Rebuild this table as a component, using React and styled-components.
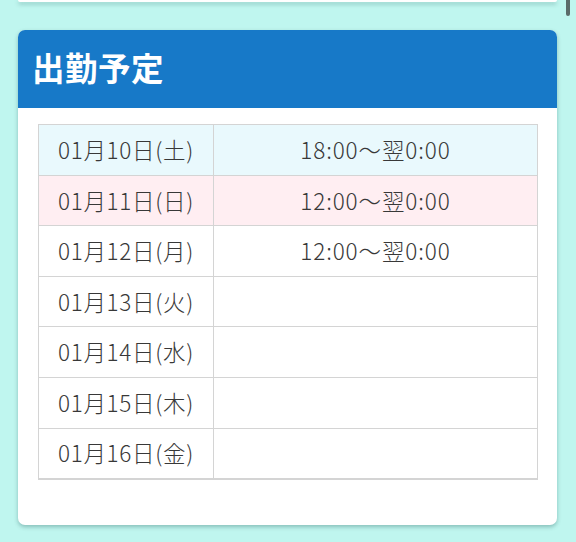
import styled, { createGlobalStyle } from "styled-components";

const schedule = [
  { date: "01月10日(土)", time: "18:00〜翌0:00", tone: "sat" },
  { date: "01月11日(日)", time: "12:00〜翌0:00", tone: "sun" },
  { date: "01月12日(月)", time: "12:00〜翌0:00" },
  { date: "01月13日(火)", time: "" },
  { date: "01月14日(水)", time: "" },
  { date: "01月15日(木)", time: "" },
  { date: "01月16日(金)", time: "" },
];

const toneColors = {
  sat: "#e9f9fd",
  sun: "#ffeef2",
};

const GlobalStyle = createGlobalStyle`
  html, body {
    margin: 0;
    background: #bff6ef;
    overflow: hidden;
  }
  body {
    font-family: "Noto Sans CJK JP", "Noto Sans", sans-serif;
  }
`;

const App = () => {
  return (
    <Page>
      <GlobalStyle />
      <TopCard />
      <Card>
        <CardHeader>
          <Title>出勤予定</Title>
        </CardHeader>
        <CardBody>
          <Table>
            <tbody>
              {schedule.map((row) => (
                <Row key={row.date} $tone={row.tone}>
                  <DateCell>{row.date}</DateCell>
                  <TimeCell>{row.time}</TimeCell>
                </Row>
              ))}
            </tbody>
          </Table>
        </CardBody>
      </Card>
      <ScrollThumb />
    </Page>
  );
};

export default App;

const Page = styled.div`
  position: relative;
  width: 576px;
  height: 542px;
  padding: 0 19px 0 18px;
  box-sizing: border-box;
  display: flex;
  flex-direction: column;
  gap: 28px;
`;
const TopCard = styled.div`
  height: 2px;
  background: #fff;
  border-radius: 0 0 6px 6px;
  box-shadow: 0 2px 4px rgba(0, 60, 60, 0.35);
`;
const Card = styled.div`
  background: #fff;
  border-radius: 7px;
  overflow: hidden;
  box-shadow: 0 2px 4px rgba(0, 60, 60, 0.3);
`;
const CardHeader = styled.div`
  height: 78px;
  background: #1779c8;
  display: flex;
  align-items: center;
  padding: 0 14px 4px;
  box-sizing: border-box;
`;
const Title = styled.h2`
  margin: 0;
  color: #fff;
  font-size: 32.5px;
  line-height: 1;
  font-weight: 700;
  letter-spacing: 0.5px;
`;
const CardBody = styled.div`
  padding: 16px 19px 45px 20px;
`;
const Table = styled.table`
  width: 100%;
  border-collapse: collapse;
  border: 1px solid #d4d4d4;
  border-bottom-width: 2px;
`;
const Row = styled.tr`
  height: 50.6px;
  background: ${(p) => toneColors[p.$tone] || "#fff"};
`;
const DateCell = styled.td`
  width: 175px;
  box-sizing: border-box;
  padding: 0 0 1px;
  border: 1px solid #d4d4d4;
  text-align: center;
  font-size: 22.5px;
  line-height: 1;
  font-weight: 300;
  letter-spacing: 0.7px;
  color: #383838;
`;
const TimeCell = styled(DateCell)`
  width: auto;
  letter-spacing: 0.9px;
`;
const ScrollThumb = styled.div`
  position: absolute;
  top: 0;
  right: 6px;
  width: 4px;
  height: 16px;
  border-radius: 0 0 2px 2px;
  background: #5a6b69;
`;
